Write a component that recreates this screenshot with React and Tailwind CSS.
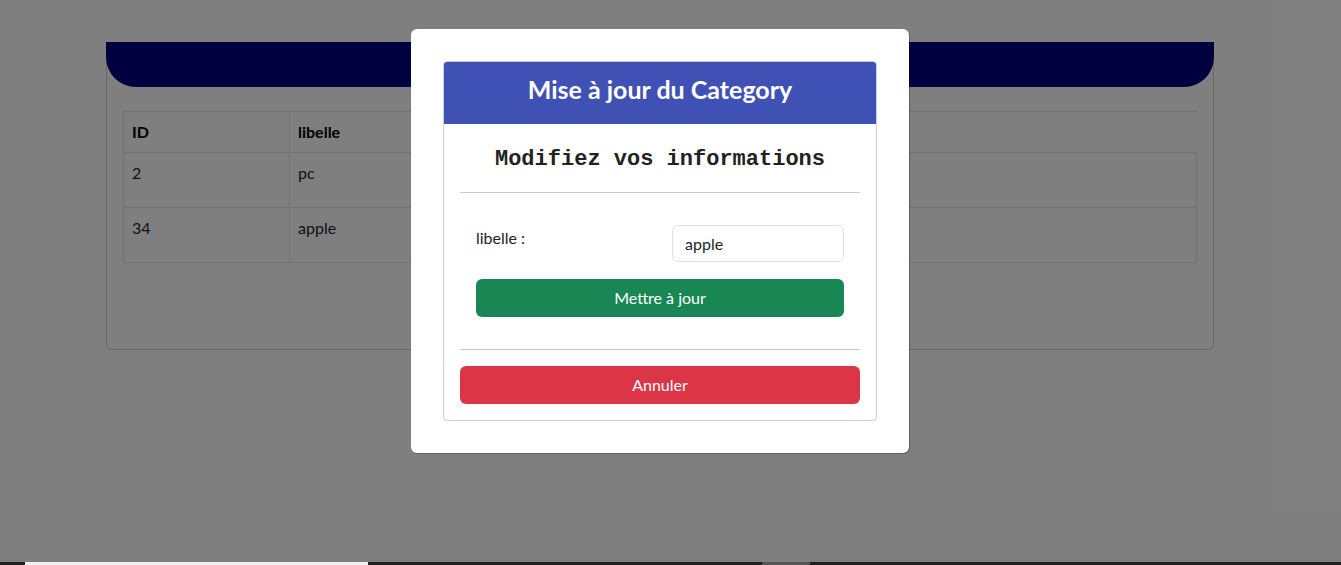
export default function App() {
  return (
    <div className="relative h-[565px] overflow-hidden bg-white font-['Lato','Noto_Sans',sans-serif] text-[#212529]">
      {/* Page behind the modal */}
      <div className="ml-[106px] mt-[42px] h-[308px] w-[1108px] rounded-b-md border border-t-0 border-[#d0d0d0]">
        <div className="-mx-px h-[45px] rounded-b-[30px] bg-[#000080]" />
        <div className="px-4 pt-6">
          <table className="w-full border-collapse text-base">
            <thead>
              <tr className="h-[41px]">
                <th className="w-[166px] border border-[#dee2e6] px-2 text-left font-bold text-black">ID</th>
                <th className="w-[400px] border border-[#dee2e6] px-2 text-left font-bold text-black">libelle</th>
                <th className="border-t border-[#dee2e6]" />
              </tr>
            </thead>
            <tbody>
              <tr className="h-[55px] align-top">
                <td className="border border-[#dee2e6] px-2 pt-[8px]">2</td>
                <td className="border border-[#dee2e6] px-2 pt-[8px]">pc</td>
                <td className="border border-[#dee2e6]" />
              </tr>
              <tr className="h-[55px] align-top">
                <td className="border border-[#dee2e6] px-2 pt-[8px]">34</td>
                <td className="border border-[#dee2e6] px-2 pt-[8px]">apple</td>
                <td className="border border-[#dee2e6]" />
              </tr>
            </tbody>
          </table>
        </div>
      </div>

      {/* Backdrop */}
      <div className="absolute inset-0 bg-black/50" />

      {/* Modal */}
      <div className="absolute left-[411px] top-[29px] w-[498px] rounded-md bg-white p-8 shadow-[1px_1px_0_rgba(0,0,0,0.25)]">
        <div className="overflow-hidden rounded border border-[#cfcfcf]">
          <div className="-mt-px flex h-[63px] items-center justify-center bg-[#3f51b5] pb-[5px]">
            <h2 className="text-[25px] font-bold text-white">Mise à jour du Category</h2>
          </div>
          <div className="px-4 pb-4 pt-[19px]">
            <h3 className="text-center font-['Liberation_Mono',monospace] text-[22px] font-bold leading-[33px] text-[#222]">
              Modifiez vos informations
            </h3>
            <hr className="mt-[16px] border-t border-[#c8c8c8]" />
            <div className="px-4 pt-8">
              <div className="flex items-start justify-between">
                <label className="pt-[1px] leading-6">libelle :</label>
                <input
                  defaultValue="apple"
                  className="h-[37px] w-[172px] rounded-md border border-[#dee2e6] px-3 text-base text-[#212529] outline-none"
                />
              </div>
              <button className="mt-[17px] h-[38px] w-full rounded-md bg-[#198754] text-base text-white">
                Mettre à jour
              </button>
            </div>
            <hr className="mt-8 border-t border-[#c8c8c8]" />
            <button className="mt-4 h-[38px] w-full rounded-md bg-[#dc3545] text-base text-white">
              Annuler
            </button>
          </div>
        </div>
      </div>

      {/* Bottom strip */}
      <div className="absolute bottom-0 left-0 flex h-[3px] w-full bg-[#1f1f1f]">
        <div className="ml-[25px] w-[343px] bg-[#f0f0f0]" />
        <div className="ml-[394px] w-[48px] bg-[#555]" />
      </div>
    </div>
  );
}
